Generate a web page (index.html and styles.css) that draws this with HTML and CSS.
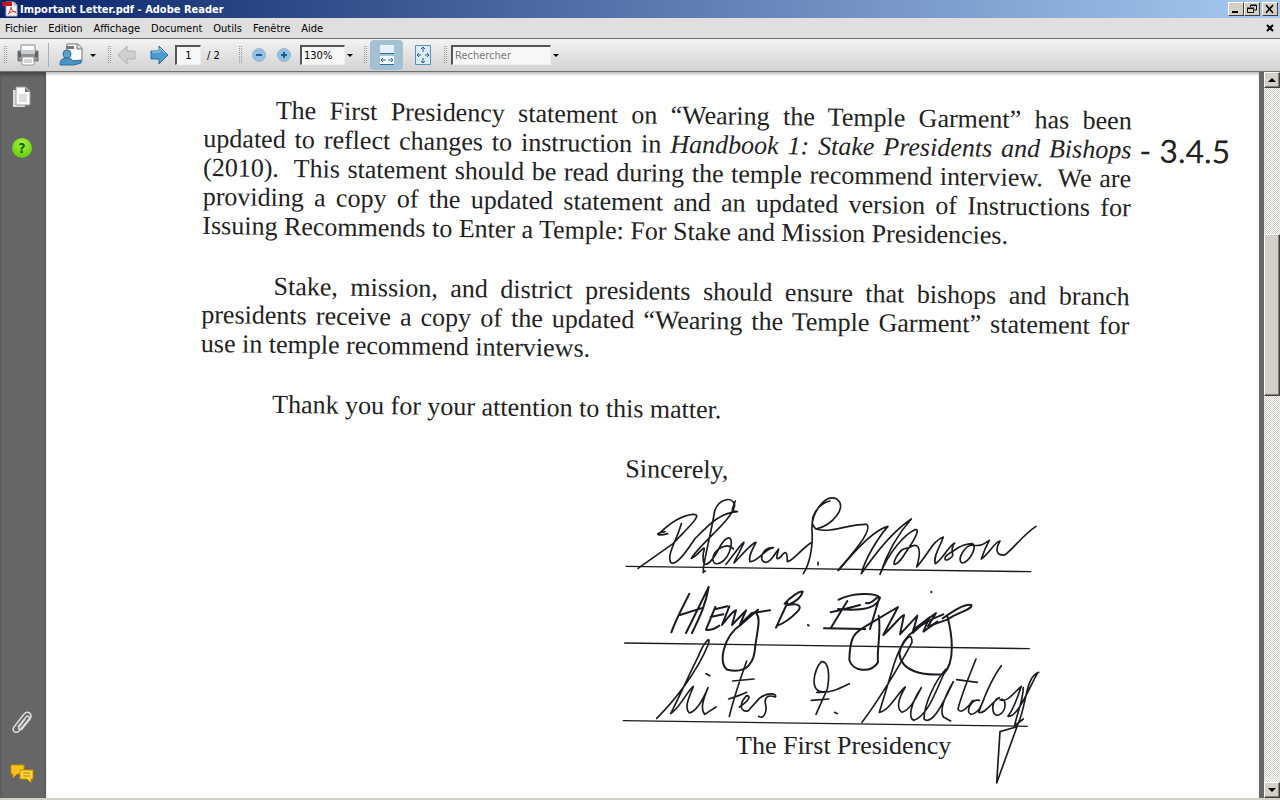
FILE: index.html
```html
<!DOCTYPE html>
<html lang="fr">
<head>
    <meta charset="UTF-8">
    <title>Important Letter.pdf - Adobe Reader</title>
    <link rel="stylesheet" href="styles.css">
</head>
<body>
    <header class="titlebar">
        <svg class="app-icon" width="16" height="16" viewBox="0 0 16 16">
            <path d="M4 1h8l3 3v11H4z" fill="#fff" stroke="#aaa"/>
            <path d="M12 1v3h3" fill="#ddd" stroke="#999"/>
            <path d="M0 1h10v4H0z" fill="#c4161c"/>
            <path d="M6 13c2-2 3-5 3-7 0 3 2 5 5 5-3-1-6 0-8 2z" fill="none" stroke="#d33"/>
        </svg>
        <span class="title">Important Letter.pdf - Adobe Reader</span>
        <button class="win-btn" aria-label="Réduire"><svg width="12" height="10"><path d="M2 8h6" stroke="#000" stroke-width="2"/></svg></button>
        <button class="win-btn" aria-label="Restaurer"><svg width="12" height="10"><path d="M4.500 3V1h6v5H8M4 1.500h7M1.500 4.500h6v4h-6zM1 4h7" fill="none" stroke="#000"/></svg></button>
        <button class="win-btn close" aria-label="Fermer"><svg width="12" height="10"><path d="M2 1l7 8M9 1L2 9" stroke="#000" stroke-width="1.600"/></svg></button>
    </header>

    <nav class="menubar">
        <button>Fichier</button>
        <button>Edition</button>
        <button>Affichage</button>
        <button>Document</button>
        <button>Outils</button>
        <button>Fenêtre</button>
        <button>Aide</button>
        <button class="doc-close" aria-label="Fermer le document"><svg width="8" height="8"><path d="M1 1l6 6M7 1L1 7" stroke="#000" stroke-width="2"/></svg></button>
    </nav>

    <div class="toolbar">
        <i class="grip"></i>
        <button class="tool print" aria-label="Imprimer">
            <svg width="24" height="24" viewBox="0 0 24 24">
                <path d="M5 2h14v8H5z" fill="#fafafa" stroke="#888"/>
                <path d="M2 8h20v10H2z" fill="#8b9094" stroke="#686c70"/>
                <path d="M2 9h3v5H2zM19 9h3v5h-3z" fill="#5e6367"/>
                <path d="M5 7h14v4H5z" fill="#c9cccf"/>
                <path d="M6 14h12v8H6z" fill="#fff" stroke="#999"/>
                <path d="M8 17h8M8 19h8" stroke="#aaa"/>
            </svg>
        </button>
        <i class="divider"></i>
        <button class="tool share" aria-label="Collaborer">
            <svg width="24" height="24" viewBox="0 0 24 24">
                <path d="M8 1h11l4 4v13H8z" fill="#fafafa" stroke="#777"/>
                <path d="M18 1v5h5" fill="#ddd" stroke="#777"/>
                <path d="M7 3h8v3H7z" fill="#777"/>
                <circle cx="8" cy="11" r="4" fill="#5a9fce" stroke="#2e6c9b"/>
                <path d="M1 22c0-5 2-7 7-7 3 0 5 1 6 3l8-1v3l-7 2z" fill="#4a93c6" stroke="#2e6c9b"/>
            </svg>
        </button>
        <button class="drop share-drop" aria-label="Options"></button>
        <i class="grip"></i>
        <button class="tool prev" aria-label="Page précédente">
            <svg width="20" height="22" viewBox="0 0 20 22"><path d="M1 11L10 2v5h8v8h-8v5z" fill="#cfcfcf" stroke="#b4b4b4"/></svg>
        </button>
        <button class="tool next" aria-label="Page suivante">
            <svg width="20" height="22" viewBox="0 0 20 22"><path d="M19 11L10 2v5H2v8h8v5z" fill="#4d9cd0" stroke="#2b6d9c"/><path d="M3 8h8V4l5 5" fill="none" stroke="#a4d3f0"/></svg>
        </button>
        <input class="field page" type="text" value="1" aria-label="Page">
        <span class="page-total">/ 2</span>
        <i class="grip"></i>
        <button class="tool zoom-out" aria-label="Zoom arrière">
            <svg width="16" height="16" viewBox="0 0 16 16"><circle cx="8" cy="8" r="6.500" fill="#8fc3e6" stroke="#a5b4be"/><path d="M5 8h6" stroke="#1d5c8c" stroke-width="2"/></svg>
        </button>
        <button class="tool zoom-in" aria-label="Zoom avant">
            <svg width="16" height="16" viewBox="0 0 16 16"><circle cx="8" cy="8" r="6.500" fill="#8fc3e6" stroke="#a5b4be"/><path d="M5 8h6M8 5v6" stroke="#1d5c8c" stroke-width="2"/></svg>
        </button>
        <select class="field zoom" aria-label="Zoom"><option>130%</option></select>
        <span class="drop zoom-drop"></span>
        <i class="grip"></i>
        <button class="tool fit-width active" aria-label="Pleine largeur">
            <svg width="16" height="20" viewBox="0 0 16 20">
                <path d="M1 0h14v8H1z" fill="#e4f1fa"/><path d="M1 8.500h14" stroke="#2f6f9f"/>
                <path d="M1 11h14v8H1z" fill="#f4fafd"/><path d="M1 19.500h14" stroke="#2f6f9f"/>
                <path d="M2 15h5M9 15h5M4 13l-2 2 2 2M12 13l2 2-2 2" fill="none" stroke="#2f6f9f"/>
            </svg>
        </button>
        <button class="tool fit-page" aria-label="Une page entière">
            <svg width="16" height="20" viewBox="0 0 16 20">
                <path d="M.500.500h15v19H.500z" fill="#dcedf8" stroke="#5b91b8"/>
                <path d="M8 2v5M8 13v5M2 10h4M10 10h4M6 4l2-2 2 2M6 16l2 2 2-2M4 8l-2 2 2 2M12 8l2 2-2 2" fill="none" stroke="#23618f"/>
            </svg>
        </button>
        <i class="grip"></i>
        <input class="field search" type="text" placeholder="Rechercher" aria-label="Rechercher">
        <button class="drop search-drop" aria-label="Options de recherche"></button>
    </div>

    <main class="viewer">
        <aside class="sidebar">
            <button aria-label="Pages">
                <svg width="20" height="24" viewBox="0 0 20 24">
                    <path d="M1 4h12v17H1z" fill="#ddd"/>
                    <path d="M4 1h10l4 4v14H4z" fill="#fff" stroke="#999"/>
                    <path d="M13 1v5h5" fill="#777"/>
                    <path d="M7 9h8M7 11h8M7 13h8M7 15h8" stroke="#bbb"/>
                </svg>
            </button>
            <button class="help" aria-label="Aide">?</button>
            <button class="attach" aria-label="Pièces jointes">
                <svg width="24" height="26" viewBox="0 0 24 26"><path d="M8 17l8-10c2-2 4 0 3 2L9 21c-3 3-8 0-5-4L14 4c4-4 9 0 6 5l-8 10c-2 2-4 0-3-2l6-8" fill="none" stroke="#ddd" stroke-width="1.500"/></svg>
            </button>
            <button aria-label="Commentaires">
                <svg width="24" height="20" viewBox="0 0 24 20">
                    <path d="M1 1h13v9H7l-4 4v-4H1z" fill="#f7c21c" stroke="#c88a00"/>
                    <path d="M10 6h13v9h-2v4l-4-4h-7z" fill="#ffd53d" stroke="#c88a00"/>
                    <path d="M13 9h7M13 12h7" stroke="#b98200"/>
                </svg>
            </button>
        </aside>

        <article class="paper">
            <div class="letter">
                <p>
                    <span class="line indent">The First Presidency statement on “Wearing the Temple Garment” has been</span>
                    <span class="line">updated to reflect changes to instruction in <em>Handbook 1: Stake Presidents and Bishops</em></span>
                    <span class="line">(2010).&nbsp; This statement should be read during the temple recommend interview.&nbsp; We are</span>
                    <span class="line">providing a copy of the updated statement and an updated version of Instructions for</span>
                    <span class="line last">Issuing Recommends to Enter a Temple: For Stake and Mission Presidencies.</span>
                    <span class="note">- 3.4.5</span>
                </p>
                <p>
                    <span class="line indent">Stake, mission, and district presidents should ensure that bishops and branch</span>
                    <span class="line">presidents receive a copy of the updated “Wearing the Temple Garment” statement for</span>
                    <span class="line last">use in temple recommend interviews.</span>
                </p>
                <p><span class="line indent last">Thank you for your attention to this matter.</span></p>
                <p class="closing">Sincerely,</p>
            </div>

            <div class="signatures">
                <svg class="ink" width="450" height="310" viewBox="0 0 1350 930">
                    <g class="rules">
                        <path d="M48 256L1262 272M44 486L1258 503M40 719L1252 736"/>
                    </g>
                    <g>
                        <path d="M165 152c-38 6-20 14 8 6M145 160c30-30 70-57 104-60 34-2-18 42-60 88L84 262M214 128c-14 50-44 92-32 116 14 14 46-30 72-70 40-40 76-80 128-82-20-4-18-1-6-32"/>
                        <path d="M374 72c-8-28-48-18-60 18-8 52-26 120-34 172 2 20-6 12 6 8M374 72c-4 42-104 116-130 160 20-6 48-54 36-16-6 60 24 30 46-12 24-46 44-42 36-4-10 44-50 64-54 34 4-30 44-52 62-30"/>
                        <path d="M348 250c24-30 44-60 54-66-8 22-24 44-30 62 20-20 52-60 66-62-10 20-24 42-18 58 22 2 44-38 70-42-34-4-48 46-20 44 18-6 26-30 36-40-8 26-8 36 6 24 14-20 20-18 20 14 14 0 36-32 70-56"/>
                        <path d="M606 150c-4-50 34-108 70-98 42 22-8 80-58 92-30-24 8-80 42-84M606 150c4 48-8 100-26 128M624 244v8M618 144c50 14 96-16 152-14 22 16-54 102-86 138"/>
                        <path d="M686 268c44-54 104-122 148-132-30 34-68 96-80 142 40-58 98-130 150-164-38 42-72 100-94 166 26-66 74-120 104-134 20-4-2 32-28 70-20 34-46 50-28 14 18-34 32-26 40-30 20-16 42-8 22 58 38-44 50-80 80-90-10 30-32 60-24 80 22-12 40-54 58-62-20 22 6 36-14 46-18 14-26-4 10-22 24-18 38-20 54-22 24 2-8 60-28 58-18-10 10-54 32-54 24 6 38-6 50-14-14 24-20 44-24 56 26-18 42-54 56-54-16 28-10 44 14 42 24-16 54-60 94-86"/>
                    </g>
                    <g transform="translate(0 270)" class="bold">
                        <path d="M184 184c18-50 44-94 54-116M296 48l-68 138M296 48c-10 60-32 100-50 138M210 132l70-22M316 108l-28 68c24 4 32-8 40-12M302 138l38-8M318 114l34-8M358 106l-22 56c16-20 32-42 42-44l-12 44 42-44-18 42 36-34 54-8"/>
                        <path d="M444 116l-50 44c-56 36-70 120-42 136 60 14 82-22 84-74 10-60 14-80 4-94M532 96l-34 74M524 98c18-20 46-40 54-36-4 18-26 32-44 40 38-8 42 8 26 22-20 20-42 34-58 40M594 162l2 2"/>
                        <path d="M686 86c42-22 110-22 124-6-10 34-62 40-126 34M712 90l-50 82M642 172l124 2M662 124c26-6 60-14 88-22M768 96c20 6 38-28 40-16l-28 94"/>
                        <path d="M806 134c8 50-6 100-2 140-22 34-78 28-86-8 2-72 12-80 62-108l84-50-44 84c30-26 52-58 62-60l-12 58 52-56-14 52c28-24 40-40 50-46l-18 42 42-30"/>
                        <path d="M964 62v2M910 176l68-50-24 40 58-20c34-24 76-30 72-44-24-4-60 22-86 40M1000 130c-58 22-126 64-132 118 6 54 70 66 132 62 38-36 26-122 12-174"/>
                    </g>
                    <g transform="translate(0 450)">
                        <path d="M140 262c50-50 120-136 154-220 12-36-14-4-28 32-30 60-66 140-84 174 30-20 52-72 68-82-14 36-28 64-12 80 24-6 42-42 56-76-14 34-24 64-10 80l34-22M288 128l12 6M410 90c-18 50-38 108-52 166M368 150l64-6M356 204c26-8 42-14 54-20M388 228c28-18 36-34 22-34-24 24-20 50 4 46l34-38c26-20 54-14 48-4-30-10-34 8-28 28 2 20-8 40-22 30"/>
                        <path d="M646 182c-50 8-36-66-12-90 22-4 26 40 18 82l-34 76M620 184c44 2 66-10 98-26M604 208l52-4M674 244l8 4"/>
                        <path d="M756 274c48-64 112-168 150-240 0-50-40 20-54 66l-44 144c30-4 58-62 78-76-20 34-28 64-10 76 28-10 44-48 58-74-30 44-42 92-22 98 42-16 64-84 96-154-32 34-66 106-66 150 26 24 66-66 88-112-30 52-42 86-30 106l22 12"/>
                        <path d="M1098 84c-20 50-44 108-54 150 8 20 34-10 44-26M1040 146l62 8M1174 104c-30 40-50 90-68 140M1108 208c-22-6-44 34-26 42 24-2 34-30 40-46M1106 244c18 8 44-36 62-44-28 8-24 60-2 52 28-14 22-54 4-46 22 10 42-22 64-40-10 26-20 64-40 90 30 4 66-92 88-128M1286 124c-42 16-34 96-64 160l-62 172 10-154 48-14M1240 170c-2 44-20 80-26 114l26-20"/>
                    </g>
                </svg>
                <p class="caption">The First Presidency</p>
            </div>
        </article>

        <div class="scrollbar">
            <button class="arrow up" aria-label="Défiler vers le haut"></button>
            <div class="track before"></div>
            <div class="thumb"></div>
            <div class="track after"></div>
            <button class="arrow down" aria-label="Défiler vers le bas"></button>
        </div>
    </main>
</body>
</html>
```

FILE: styles.css
```css
* { box-sizing: border-box; }
body {
    margin: 0;
    height: 100vh;
    display: flex;
    flex-direction: column;
    overflow: hidden;
    background: #d4d0c8;
    font: 11px "DejaVu Sans Condensed", "DejaVu Sans", sans-serif;
    font-stretch: condensed;
    color: #000;
}
button {
    font: inherit;
    color: inherit;
    background: none;
    border: 0;
    padding: 0;
    display: flex;
    align-items: center;
    justify-content: center;
    flex: none;
}
p { margin: 0; }

/* title bar */
.titlebar {
    height: 18px;
    flex: none;
    display: flex;
    align-items: center;
    padding: 0 2px;
    background: linear-gradient(90deg, #0a246a, #a6caf0);
}
.title {
    flex: 1;
    margin-left: 2px;
    color: #fff;
    font-weight: bold;
}
.win-btn {
    width: 16px;
    height: 14px;
    background: #d4d0c8;
    border: 1px solid;
    border-color: #fff #404040 #404040 #fff;
}
.win-btn.close { margin-left: 2px; }

/* menu */
.menubar {
    height: 21px;
    flex: none;
    display: flex;
    align-items: center;
    padding-left: 5px;
    gap: 11px;
    background: #dfdfdf;
    border-bottom: 1px solid #707070;
}
.doc-close { margin-left: auto; margin-right: 6px; }

/* toolbar */
.toolbar {
    height: 33px;
    flex: none;
    display: flex;
    align-items: center;
    padding-left: 3px;
    background: linear-gradient(#f3f3f3, #d2d2d2);
    border-bottom: 1px solid #707070;
}
.grip {
    width: 4px;
    height: 18px;
    flex: none;
    background: conic-gradient(#999 25%, transparent 0) 0 0 / 2px 2px;
}
.divider { width: 1px; height: 24px; background: #9db3c2; }
.tool { height: 30px; }
.print { width: 41px; }
.share { width: 44px; }
.share-drop { margin-right: 9px; margin-left: -5px; }
.prev { width: 32px; }
.next { width: 32px; }
.zoom-out { width: 26px; margin-left: 4px; }
.zoom-in { width: 24px; }
.fit-width { width: 33px; margin-left: 3px; border-radius: 4px; }
.fit-width.active { background: #a3c1d5; }
.fit-page { width: 40px; }
.field {
    height: 20px;
    margin: 0;
    border: 1px solid;
    border-color: #555 #eee #eee #555;
    border-width: 2px 1px 1px 2px;
    border-radius: 0;
    background: #f7f7f7;
    font: inherit;
    color: #000;
    padding: 0 2px;
    appearance: none;
}
.page { width: 26px; text-align: center; }
.page-total { width: 37px; padding-left: 6px; }
.zoom { width: 45px; margin-left: 4px; }
.search { width: 100px; margin-left: 4px; }
.search::placeholder { color: #777; opacity: 1; }
.drop { width: 10px; height: 20px; }
.drop::after {
    content: "";
    display: block;
    border: 3px solid transparent;
    border-top-color: #000;
    border-bottom: 0;
}
.zoom-drop {
    display: flex;
    align-items: center;
    justify-content: center;
    margin-right: 8px;
}

/* document area */
.viewer {
    flex: 1;
    min-height: 0;
    display: flex;
    border-bottom: 2px solid #d4d0c8;
}
.sidebar {
    width: 46px;
    flex: none;
    display: flex;
    flex-direction: column;
    align-items: center;
    gap: 28px;
    padding: 14px 2px 14px 0;
    background: #666;
    box-shadow: inset 0 3px 3px #484848;
}
.help {
    width: 20px;
    height: 20px;
    border-radius: 50%;
    background: radial-gradient(circle at 50% 30%, #a6f53c, #4ec400);
    color: #14600a;
    font-size: 14px;
    font-weight: bold;
}
.attach { margin-top: auto; }
.paper {
    flex: 1;
    min-width: 0;
    overflow: hidden;
    padding: 23px 0 0 158px;
    background: #fff;
    border-right: 5px solid #666;
    box-shadow: inset 0 3px 3px -1px #bbb;
    font-family: "Liberation Serif", serif;
    font-size: 26px;
    line-height: 29px;
    color: #222;
}
/* the scan is slightly skewed */
.letter {
    width: 928px;
    transform: rotate(.7deg);
    transform-origin: 0 0;
}
.letter p { position: relative; margin-bottom: 31px; }
.line {
    display: block;
    text-align: justify;
    text-align-last: justify;
    white-space: nowrap;
}
.line.last { text-align-last: left; }
.indent { padding-left: 72px; }
.note {
    position: absolute;
    left: 100%;
    top: 29px;
    margin-left: 8px;
    font: 32px/29px Lato, sans-serif;
    white-space: nowrap;
}
.letter .closing { margin: 0 0 0 426px; }
.signatures {
    position: relative;
    width: 450px;
    margin: 3px 0 0 406px;
    padding-top: 250px;
}
.ink {
    position: absolute;
    left: 0;
    top: 0;
    fill: none;
    stroke: #1b1b22;
    stroke-width: 5;
    stroke-linecap: round;
    stroke-linejoin: round;
}
.ink .rules { stroke-width: 4; }
.ink .bold { stroke-width: 6; }
.caption { padding-left: 126px; }

/* scrollbar */
.scrollbar {
    width: 16px;
    flex: none;
    display: flex;
    flex-direction: column;
}
.arrow, .thumb {
    background: #d4d0c8;
    border: 1px solid;
    border-color: #fff #404040 #404040 #fff;
    box-shadow: inset -1px -1px #808080;
}
.arrow { height: 16px; width: 16px; }
.arrow::after {
    content: "";
    border: 4px solid transparent;
}
.up::after { border-bottom-color: #000; border-top: 0; }
.down::after { border-top-color: #000; border-bottom: 0; }
.track { background: repeating-conic-gradient(#fff 0 25%, #d4d0c8 0 50%) 0 0 / 2px 2px; }
.before { flex: 147; }
.thumb { flex: 160; }
.after { flex: 388; }
```
